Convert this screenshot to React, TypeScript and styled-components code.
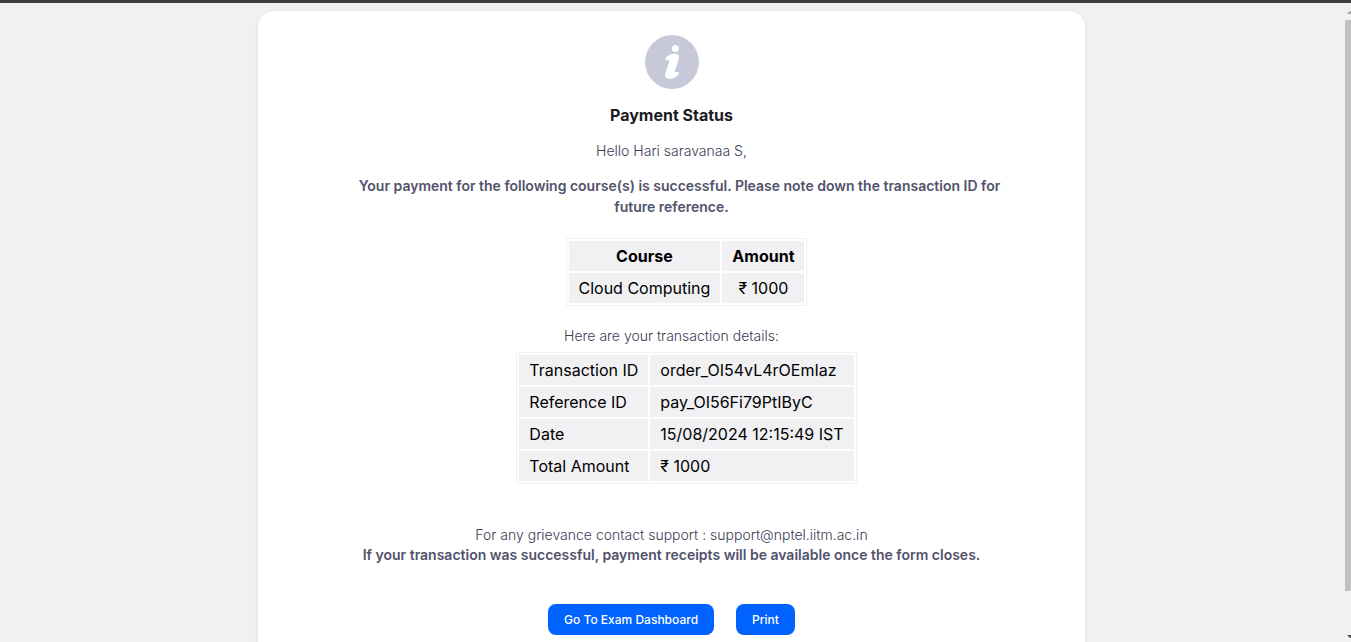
import React from "react";
import styled, { createGlobalStyle } from "styled-components";

const GlobalStyle = createGlobalStyle`
  * { box-sizing: border-box; }
  body { margin: 0; background: #f1f1f4; font-family: Inter, "Liberation Sans", sans-serif; }
`;

const Page = styled.div`
  display: flex;
  flex-direction: column;
  height: 100vh;
  overflow: hidden;
  border-top: 3px solid #403d3f;
`;

const Body = styled.div`
  display: flex;
  flex: 1;
  min-height: 0;
`;

const Content = styled.main`
  flex: 1;
  min-width: 0;
  overflow: hidden;
  padding: 8px 24px 0;
`;

const Card = styled.section`
  display: flex;
  flex-direction: column;
  align-items: center;
  max-width: 827px;
  margin: 0 auto;
  padding: 24px 80px 32px;
  background: #fff;
  border-radius: 16px;
  box-shadow: 0 1px 4px rgba(60, 60, 90, 0.1);
  text-align: center;
`;

const InfoIcon = styled.svg`
  display: block;
  width: 54px;
  height: 54px;
`;

const Title = styled.h1`
  margin: 16px 0 0;
  font-size: 16px;
  line-height: 20px;
  font-weight: 700;
  color: #1c1c24;
`;

const Text = styled.p<{ $gap: number; $strong?: boolean; $indent?: boolean }>`
  margin: ${(p) => p.$gap}px 0 0;
  font-size: 14px;
  line-height: ${(p) => (p.$indent ? 21 : 20)}px;
  font-weight: ${(p) => (p.$strong ? 600 : 300)};
  text-indent: ${(p) => (p.$indent ? 16 : 0)}px;
  color: ${(p) => (p.$strong ? "#52526c" : "#3c3c54")};
`;

const Table = styled.table<{ $gap: number; $align: string }>`
  margin: ${(p) => p.$gap}px 0 0 30px;
  border: 1px solid #f1f1f4;
  border-spacing: 2px;
  font-size: 16px;
  font-weight: 400;
  line-height: 20px;
  color: #000;
  text-align: ${(p) => p.$align};

  th, td {
    padding: 5px 10px;
    background: #f1f1f4;
  }
  th { font-weight: 700; }
  tbody th { font-weight: 400; text-align: left; }
`;

const Actions = styled.div`
  display: flex;
  gap: 22px;
  margin-top: 39px;
`;

const Button = styled.button`
  padding: 0 16px;
  height: 31px;
  border: 0;
  border-radius: 8px;
  background: #0062ff;
  color: #fff;
  font: 500 12px/16px Inter, "Liberation Sans", sans-serif;
  cursor: pointer;
`;

const Scrollbar = styled.div`
  display: flex;
  flex-direction: column;
  justify-content: space-between;
  align-items: flex-end;
  width: 8px;
  padding: 8px 0 4px;
  overflow: hidden;
  background: #f1f1f1;
`;

const Thumb = styled.div`
  width: 6px;
  flex: 1;
  margin: 6px 0 44px;
  background: #c1c1c1;
`;

const Arrow = styled.svg`
  display: block;
  flex: none;
  width: 4px;
  height: 3px;
`;

const details = [
  ["Transaction ID", "order_OI54vL4rOEmIaz"],
  ["Reference ID", "pay_OI56Fi79PtIByC"],
  ["Date", "15/08/2024 12:15:49 IST"],
  ["Total Amount", "₹ 1000"],
];

export default function App() {
  return (
    <>
      <GlobalStyle />
      <Page>
        <Body>
          <Content>
            <Card>
              <InfoIcon viewBox="0 0 54 54" aria-hidden="true">
                <circle cx="27" cy="27" r="27" fill="#c7c8d9" />
                <circle cx="30.3" cy="13.4" r="3.5" fill="#fff" />
                <path
                  d="M20.3 25.2C20.3 21.4 25 18.7 29.4 18.7C33.2 18.7 34.8 20.8 33.7 24.2L29.5 37H34C34 40.8 29.4 43.8 24.8 43.8C21 43.8 19.2 41.8 20.3 38.4L24.6 25.2Z"
                  fill="#fff"
                />
              </InfoIcon>
              <Title>Payment Status</Title>
              <Text $gap={16}>Hello Hari saravanaa S,</Text>
              <Text $gap={14} $strong $indent>
                Your payment for the following course(s) is successful. Please note down the transaction ID for
                future reference.
              </Text>
              <Table $gap={21} $align="center">
                <thead>
                  <tr>
                    <th scope="col">Course</th>
                    <th scope="col">Amount</th>
                  </tr>
                </thead>
                <tbody>
                  <tr>
                    <td>Cloud Computing</td>
                    <td>₹ 1000</td>
                  </tr>
                </tbody>
              </Table>
              <Text $gap={20}>Here are your transaction details:</Text>
              <Table $gap={6} $align="left">
                <tbody>
                  {details.map(([label, value]) => (
                    <tr key={label}>
                      <th scope="row">{label}</th>
                      <td>{value}</td>
                    </tr>
                  ))}
                </tbody>
              </Table>
              <Text $gap={41}>For any grievance contact support : support@nptel.iitm.ac.in</Text>
              <Text $gap={0} $strong>
                If your transaction was successful, payment receipts will be available once the form closes.
              </Text>
              <Actions>
                <Button type="button">Go To Exam Dashboard</Button>
                <Button type="button">Print</Button>
              </Actions>
            </Card>
          </Content>
          <Scrollbar aria-hidden="true">
            <Arrow viewBox="0 0 4 3">
              <path d="M0 3L3 0H4V3Z" fill="#a3a3a3" />
            </Arrow>
            <Thumb />
            <Arrow viewBox="0 0 4 3">
              <path d="M0 0H4V3H3Z" fill="#505050" />
            </Arrow>
          </Scrollbar>
        </Body>
      </Page>
    </>
  );
}
